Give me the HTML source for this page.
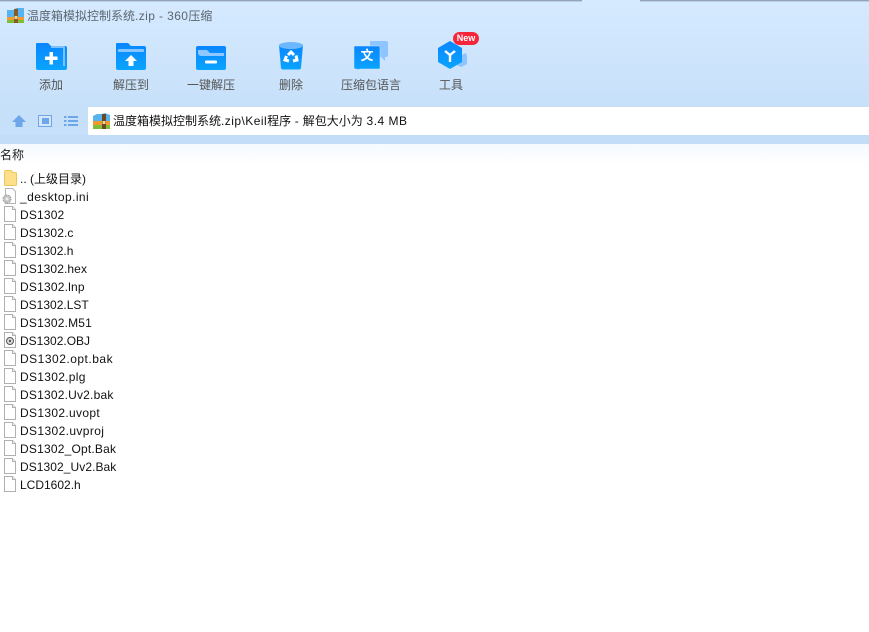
<!DOCTYPE html>
<html lang="zh">
<head>
<meta charset="utf-8">
<title>温度箱模拟控制系统.zip - 360压缩</title>
<style>
html,body{margin:0;padding:0;width:869px;height:632px;overflow:hidden;background:#fff}
body{position:relative;font-family:"Liberation Sans","Noto Sans CJK SC",sans-serif;font-size:12px}
.abs{position:absolute}
.top{left:0;top:0;width:869px;height:107px;background:linear-gradient(#d5eaff,#c7e0f9)}
.strip{left:0;top:0;width:869px;height:2px;background:linear-gradient(#7f8fa3,#cfe5fb)}
.gap{left:582px;top:0;width:58px;height:2px;background:#d5eaff}
.title{left:27px;top:8px;line-height:17px;color:#5c6670;white-space:nowrap}
.lbl{top:77px;line-height:17px;color:#555;transform:translateX(-50%);white-space:nowrap}
.addr{left:88px;top:107px;width:781px;height:28px;background:#fff}
.addrside{left:0;top:107px;width:88px;height:28px;background:#c7e0f9}
.band{left:0;top:135px;width:869px;height:9px;background:#c3dcf8}
.fade{left:0;top:144px;width:869px;height:22px;background:linear-gradient(#f5faff,#fff)}
.addrtext{left:113px;top:113px;line-height:17px;color:#111;white-space:nowrap}
.hdr{left:0;top:147px;line-height:17px;color:#222;white-space:nowrap}
.row{left:20px;height:18px;line-height:18px;color:#111;white-space:nowrap}
.ic{left:4px;width:12px;height:16px}
</style>
</head>
<body>
<div class="abs top"></div>
<div class="abs strip"></div>
<div class="abs gap"></div>

<svg class="abs" style="left:7px;top:8px" width="17" height="15" viewBox="0 0 17 15">
<path d="M0 2h7l2-2h8v15H0z" fill="#58b4ee"/>
<rect x="0" y="9" width="17" height="3" fill="#ef9a2c"/>
<rect x="0" y="12" width="17" height="3" fill="#7fbf38"/>
<rect x="7" y="1" width="4" height="14" fill="#8a5a28"/>
<rect x="7.500" y="8" width="3" height="3" fill="#f4d58a"/>
</svg>
<div class="abs title">温度箱模拟控制系统<span style="letter-spacing:.4px">.zip - 360</span>压缩</div>

<svg class="abs" style="left:36px;top:43px" width="32" height="27" viewBox="0 0 32 27">
<defs>
<linearGradient id="g" x1="0" y1="0" x2="0" y2="1"><stop offset="0" stop-color="#0a86ff"/><stop offset="1" stop-color="#0aa4ff"/></linearGradient>
</defs>
<path d="M1 0h11l3 3h14a2 2 0 0 1 2 2v20a2 2 0 0 1-2 2H2a2 2 0 0 1-2-2V1a1 1 0 0 1 1-1z" fill="url(#g)"/>
<path d="M15 3h13a1 1 0 0 1 1 1v19h-2V5H15z" fill="#7cc0ff"/>
<path d="M13.500 9h3.500v4.500h4.500v3.500H17v4.500h-3.500V17H9v-3.500h4.500z" fill="#fff"/>
</svg>

<svg class="abs" style="left:116px;top:43px" width="30" height="27" viewBox="0 0 30 27">
<path d="M1 0h11l3 3h13a2 2 0 0 1 2 2v20a2 2 0 0 1-2 2H2a2 2 0 0 1-2-2V1a1 1 0 0 1 1-1z" fill="url(#g)"/>
<rect x="2" y="6" width="26" height="3" rx="1" fill="#86c6ff"/>
<path d="M15 12l6 6h-3.500v5h-5v-5H9z" fill="#fff"/>
</svg>

<svg class="abs" style="left:196px;top:46px" width="30" height="24" viewBox="0 0 30 24">
<rect width="30" height="24" rx="2" fill="url(#g)"/>
<path d="M2 4h9l3 3h14v3H5a3 3 0 0 1-3-3z" fill="#8fc8ff"/>
<rect x="9" y="14.500" width="12" height="3" rx="1" fill="#fff"/>
</svg>

<svg class="abs" style="left:278px;top:41px" width="26" height="29" viewBox="0 0 26 29">
<path d="M1 4h24l-2 23a2 2 0 0 1-2 1.500H5A2 2 0 0 1 3 27z" fill="url(#g)"/>
<ellipse cx="13" cy="4.500" rx="12" ry="3.500" fill="#6cb8ff"/>
<g fill="none" stroke="#fff" stroke-width="3">
<path d="M10 14l3-3 3 3"/><path d="M18 14.500l1 4.500-4 1"/><path d="M11 20l-4-1 1.500-4"/>
</g>
</svg>

<svg class="abs" style="left:354px;top:41px" width="35" height="29" viewBox="0 0 35 29">
<path d="M16 0h16a2 2 0 0 1 2 2v12a2 2 0 0 1-2 2h-1v4l-4-4H16z" fill="#8cc5ff"/>
<path d="M1 5h24a1 1 0 0 1 1 1v21a1 1 0 0 1-1 1H6l-3 0.800V28H1a1 1 0 0 1-1-1V6a1 1 0 0 1 1-1z" fill="url(#g)" stroke="#d0e6fd" stroke-width="0.500"/>
</svg>
<div class="abs" style="left:360px;top:48px;width:14px;line-height:16px;color:#fff;font-size:13px;font-weight:bold;text-align:center">文</div>

<svg class="abs" style="left:437px;top:41px" width="31" height="29" viewBox="0 0 31 29">
<path d="M22 15l7-3 1 3v8l-6 3-4-2z" fill="#8cc5ff"/>
<path d="M13 0l12 7v14l-12 7L1 21V7z" fill="url(#g)"/>
<path d="M8 10l5 4 5-4M13 14v7" fill="none" stroke="#fff" stroke-width="2.400"/>
</svg>
<div class="abs" style="left:453px;top:32px;width:26px;height:13px;border-radius:7px;background:#f5253a;color:#fff;font-size:9px;font-weight:bold;line-height:13px;text-align:center">New</div>

<div class="abs lbl" style="left:51px">添加</div>
<div class="abs lbl" style="left:131px">解压到</div>
<div class="abs lbl" style="left:211px">一键解压</div>
<div class="abs lbl" style="left:291px">删除</div>
<div class="abs lbl" style="left:371px">压缩包语言</div>
<div class="abs lbl" style="left:451px">工具</div>

<div class="abs addrside"></div>
<div class="abs addr"></div>
<div class="abs band"></div>
<div class="abs fade"></div>

<svg class="abs" style="left:12px;top:114px" width="14" height="14" viewBox="0 0 14 14"><path d="M7 1l7 7h-3.500v5h-7V8H0z" fill="#6ea6ea"/></svg>
<svg class="abs" style="left:38px;top:115px" width="14" height="12" viewBox="0 0 14 12"><rect x="0.500" y="0.500" width="13" height="11" fill="#d5e6fb" stroke="#6ea6ea"/><rect x="4" y="3" width="7" height="6" fill="#6ea6ea"/></svg>
<svg class="abs" style="left:64px;top:115px" width="14" height="12" viewBox="0 0 14 12" fill="#6ea6ea"><rect y="1" width="2.500" height="2"/><rect x="4" y="1" width="10" height="2"/><rect y="5" width="2.500" height="2"/><rect x="4" y="5" width="10" height="2"/><rect y="9" width="2.500" height="2"/><rect x="4" y="9" width="10" height="2"/></svg>

<svg class="abs" style="left:93px;top:113px" width="17" height="16" viewBox="0 0 17 16">
<path d="M0 3l4-2h5l3-1 5 2v14H0z" fill="#58b4ee"/>
<rect y="8" width="17" height="4" fill="#ef9a2c"/>
<rect y="12" width="17" height="4" fill="#7fbf38"/>
<rect x="9" y="1" width="4" height="15" fill="#6d4a24"/>
<rect x="9.500" y="8" width="3" height="3" fill="#f4d58a"/>
</svg>
<div class="abs addrtext">温度箱模拟控制系统<span style="letter-spacing:.45px">.zip\Keil</span>程序<span style="letter-spacing:.3px"> - </span>解包大小为<span style="letter-spacing:.5px"> 3.4 MB</span></div>

<div class="abs hdr">名称</div>

<svg class="abs" style="left:4px;top:170px" width="13" height="16" viewBox="0 0 13 16"><path d="M0.500 1.500a1 1 0 0 1 1-1h6l1 2h3a1 1 0 0 1 1 1v11a1 1 0 0 1-1 1h-10a1 1 0 0 1-1-1z" fill="#ffe08a" stroke="#eec45c"/></svg>
<div class="abs row" style="top:170px">.. (上级目录)</div>

<svg class="abs" style="left:1px;top:188px" width="16" height="17" viewBox="0 0 16 17"><path d="M4.500 0.500h7l3 3v12h-10z" fill="#fff" stroke="#b5b5b5"/><circle cx="6" cy="11" r="4" fill="#c4c4c4" stroke="#999" stroke-dasharray="1.500 1"/><circle cx="6" cy="11" r="1.500" fill="#eee"/></svg>
<div class="abs row" style="top:188px;letter-spacing:.42px">_desktop.ini</div>

<svg width="0" height="0" style="position:absolute"><defs><g id="f"><path d="M0.500 0.500h8l3 3v12h-11z" fill="#fff" stroke="#b0b0b0"/><path d="M8.500 0.500v3h3" fill="#f4f4f4" stroke="#b0b0b0"/></g></defs></svg>

<svg class="abs ic" style="top:206px"><use href="#f"/></svg><div class="abs row" style="top:206px;letter-spacing:.17px">DS1302</div>
<svg class="abs ic" style="top:224px"><use href="#f"/></svg><div class="abs row" style="top:224px;letter-spacing:.1px">DS1302.c</div>
<svg class="abs ic" style="top:242px"><use href="#f"/></svg><div class="abs row" style="top:242px">DS1302.h</div>
<svg class="abs ic" style="top:260px"><use href="#f"/></svg><div class="abs row" style="top:260px;letter-spacing:.1px">DS1302.hex</div>
<svg class="abs ic" style="top:278px"><use href="#f"/></svg><div class="abs row" style="top:278px;letter-spacing:.2px">DS1302.lnp</div>
<svg class="abs ic" style="top:296px"><use href="#f"/></svg><div class="abs row" style="top:296px">DS1302.LST</div>
<svg class="abs ic" style="top:314px"><use href="#f"/></svg><div class="abs row" style="top:314px;letter-spacing:.2px">DS1302.M51</div>
<svg class="abs ic" style="top:332px"><use href="#f"/><circle cx="6" cy="9" r="3.500" fill="#ddd" stroke="#555"/><circle cx="6" cy="9" r="1.200" fill="#555"/></svg><div class="abs row" style="top:332px">DS1302.OBJ</div>
<svg class="abs ic" style="top:350px"><use href="#f"/></svg><div class="abs row" style="top:350px;letter-spacing:.5px">DS1302.opt.bak</div>
<svg class="abs ic" style="top:368px"><use href="#f"/></svg><div class="abs row" style="top:368px;letter-spacing:.3px">DS1302.plg</div>
<svg class="abs ic" style="top:386px"><use href="#f"/></svg><div class="abs row" style="top:386px;letter-spacing:.2px">DS1302.Uv2.bak</div>
<svg class="abs ic" style="top:404px"><use href="#f"/></svg><div class="abs row" style="top:404px;letter-spacing:.33px">DS1302.uvopt</div>
<svg class="abs ic" style="top:422px"><use href="#f"/></svg><div class="abs row" style="top:422px;letter-spacing:.38px">DS1302.uvproj</div>
<svg class="abs ic" style="top:440px"><use href="#f"/></svg><div class="abs row" style="top:440px;letter-spacing:.2px">DS1302_Opt.Bak</div>
<svg class="abs ic" style="top:458px"><use href="#f"/></svg><div class="abs row" style="top:458px;letter-spacing:.07px">DS1302_Uv2.Bak</div>
<svg class="abs ic" style="top:476px"><use href="#f"/></svg><div class="abs row" style="top:476px">LCD1602.h</div>
</body>
</html>
